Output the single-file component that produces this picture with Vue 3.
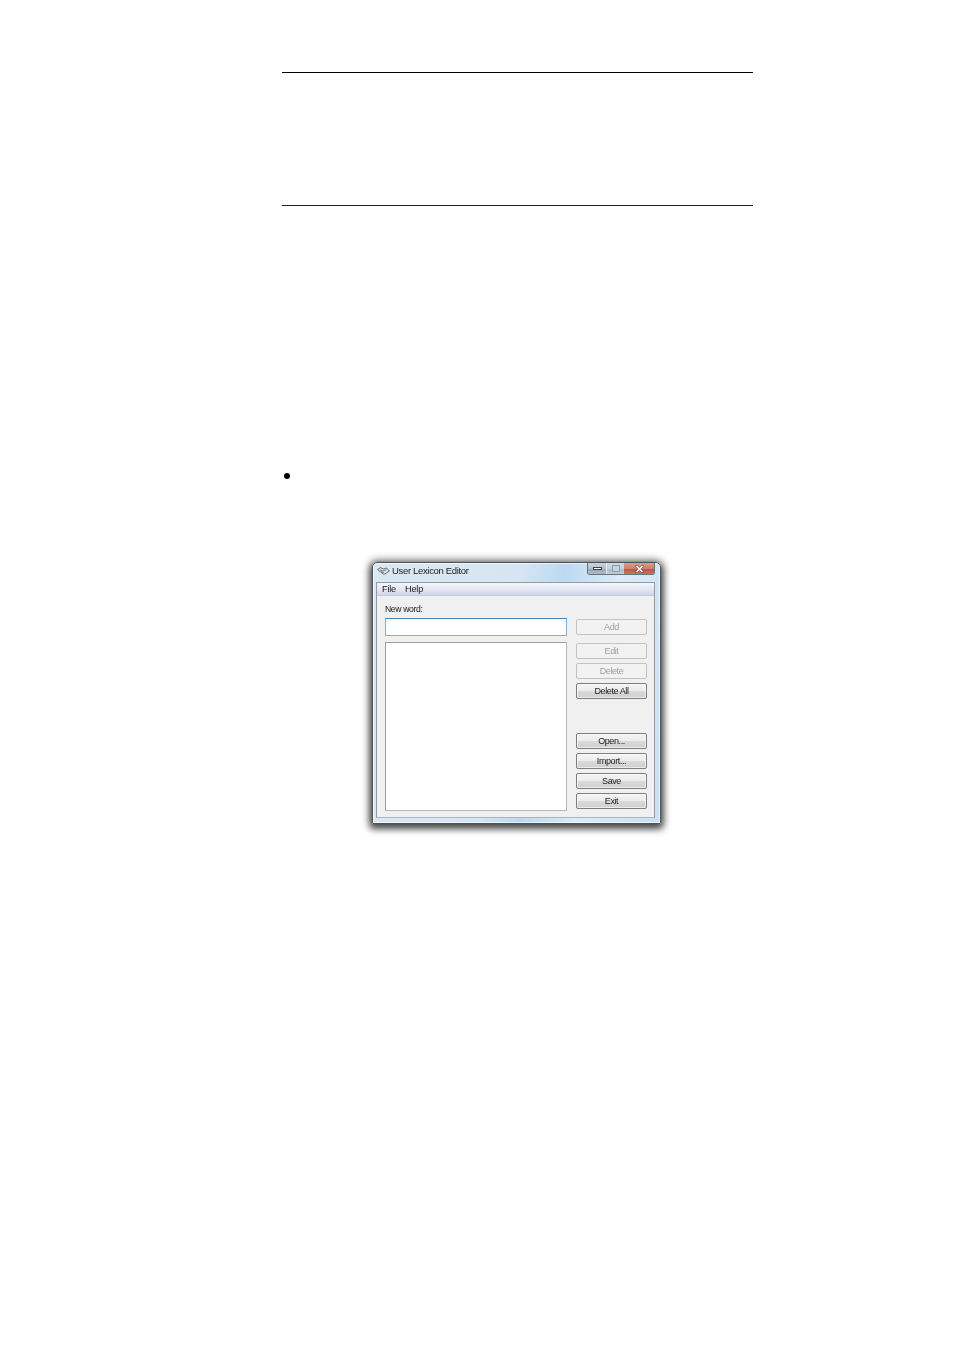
<script setup>
const topButtons = [
  { label: 'Add', disabled: true, cls: 'add' },
  { label: 'Edit', disabled: true, cls: 'edit' },
  { label: 'Delete', disabled: true, cls: 'del' },
  { label: 'Delete All', disabled: false, cls: 'delall' },
]
const bottomButtons = ['Open...', 'Import...', 'Save', 'Exit']
</script>

<template>
  <div class="page">
    <div class="sheet">
      <div class="rule rule-top"></div>
      <div class="rule rule-bottom"></div>
      <div class="bullet"></div>
    </div>
    <div class="window">
      <div class="titlebar">
        <svg class="appicon" width="13" height="10" viewBox="0 0 13 10">
          <path d="M0.5 3.5 L3.5 1.5 L6.5 3 L9.5 2 L12.5 5 L7 8.5 Z" fill="#dfe3e6" stroke="#666c72" stroke-width="1" />
          <path d="M3 3.6 L6 5 L9.5 3.6 M4 5.4 L7 7" fill="none" stroke="#7a8086" stroke-width="1" />
        </svg>
        <span class="title">User Lexicon Editor</span>
        <div class="controls">
          <div class="ctl ctl-min"><span class="min-glyph"></span></div>
          <div class="ctl ctl-max"><span class="max-glyph"></span></div>
          <div class="ctl ctl-close">
            <svg width="9" height="8" viewBox="0 0 9 8">
              <path d="M1.5 1 L7.5 7 M7.5 1 L1.5 7" stroke="#4a3a38" stroke-width="2.6" stroke-linecap="square" opacity="0.55" />
              <path d="M1.5 1 L7.5 7 M7.5 1 L1.5 7" stroke="#fff" stroke-width="1.5" />
            </svg>
          </div>
        </div>
      </div>
      <div class="client">
        <div class="menubar">
          <span class="menu-item">File</span>
          <span class="menu-item">Help</span>
        </div>
        <div class="form">
          <div class="left">
            <div class="label">New word:</div>
            <div class="input"></div>
            <div class="list"></div>
          </div>
          <div class="right">
            <div class="btn-group">
              <div
                v-for="b in topButtons"
                :key="b.label"
                class="btn"
                :class="[b.cls, { disabled: b.disabled }]"
              ><span class="btn-text">{{ b.label }}</span></div>
            </div>
            <div class="btn-group low">
              <div v-for="b in bottomButtons" :key="b" class="btn"><span class="btn-text">{{ b }}</span></div>
            </div>
          </div>
        </div>
      </div>
    </div>
  </div>
</template>

<style scoped>
.page {
  width: 954px;
  height: 1350px;
  background: #fff;
  overflow: hidden;
  font-family: "Liberation Sans", Arial, sans-serif;
}
.sheet {
  width: 471px;
  margin-left: 282px;
  padding-top: 72px;
}
.rule {
  height: 1px;
  background: #000;
}
.rule-bottom {
  margin-top: 132px;
  background: #222;
}
.bullet {
  width: 6px;
  height: 6px;
  border-radius: 50%;
  background: #000;
  margin: 267px 0 0 2px;
}
.window {
  box-sizing: border-box;
  width: 289px;
  height: 262px;
  margin: 83px 0 0 372px;
  border: 1px solid #47535e;
  border-radius: 5px 5px 1px 1px;
  background:
    linear-gradient(100deg, #dbe8f3 0%, #d6e5f2 45%, #bcd9f1 58%, #dcebf7 75%, #c9dff2 100%);
  box-shadow:
    0 3px 7px 2px rgba(0, 0, 0, 0.6),
    0 0 9px 2px rgba(0, 0, 0, 0.4),
    inset 0 0 0 1px rgba(255, 255, 255, 0.65);
  display: flex;
  flex-direction: column;
}
.titlebar {
  height: 19px;
  display: flex;
  align-items: flex-start;
  flex: none;
}
.appicon {
  margin: 3px 0 0 4px;
  flex: none;
}
.title {
  margin: 2px 0 0 2px;
  font-size: 9.5px;
  letter-spacing: -0.33px;
  line-height: 12px;
  color: #1a1a1a;
  filter: blur(0.35px);
}
.controls {
  margin-left: auto;
  margin-right: 5px;
  display: flex;
  height: 12px;
  border: 1px solid #66727d;
  border-top: none;
  border-radius: 0 0 3px 3px;
  overflow: hidden;
  box-sizing: border-box;
}
.ctl {
  display: flex;
  align-items: center;
  justify-content: center;
  height: 100%;
}
.ctl-min {
  width: 18px;
  background: linear-gradient(#c7d3de 0%, #b4c2ce 50%, #98a7b4 55%, #adbbc7 100%);
  border-right: 1px solid #e4ebf1;
}
.ctl-max {
  width: 17px;
  background: linear-gradient(#cfdbe5 0%, #c2d0db 50%, #aebdc9 55%, #c0cdd8 100%);
}
.ctl-close {
  width: 30px;
  background: linear-gradient(#dc9a8e 0%, #d27e70 50%, #bd5443 55%, #cc7566 100%);
}
.min-glyph {
  display: block;
  width: 9px;
  height: 3px;
  box-sizing: border-box;
  background: #fff;
  border: 1px solid #3c4650;
}
.max-glyph {
  display: block;
  width: 8px;
  height: 7px;
  box-sizing: border-box;
  background: #c8d4de;
  border: 1px solid #8d9ba8;
}
.client {
  box-sizing: border-box;
  width: 279px;
  height: 236px;
  margin-left: 3px;
  background: #f0f0f0;
  border: 1px solid #8f9ba7;
  border-bottom-color: #a9b6c2;
  display: flex;
  flex-direction: column;
}
.menubar {
  height: 13px;
  padding-left: 5px;
  padding-bottom: 1px;
  box-sizing: border-box;
  display: flex;
  gap: 9px;
  align-items: center;
  background: linear-gradient(#f4f5fb 0%, #e3e5f3 55%, #d2d6ea 100%);
  border-bottom: 1px solid #c6cbdf;
  flex: none;
}
.menu-item {
  font-size: 9.2px;
  letter-spacing: -0.2px;
  color: #1a1a1a;
  filter: blur(0.35px);
}
.form {
  flex: 1;
  display: flex;
  padding: 8px 7px 6px 8px;
  gap: 9px;
}
.left {
  width: 182px;
  display: flex;
  flex-direction: column;
}
.label {
  font-size: 8.6px;
  letter-spacing: -0.35px;
  line-height: 10px;
  height: 14px;
  color: #1a1a1a;
  filter: blur(0.35px);
}
.input {
  box-sizing: border-box;
  height: 18px;
  background: #fff;
  border: 1px solid #7fb0d6;
  border-top-color: #4d86b4;
}
.list {
  box-sizing: border-box;
  height: 169px;
  margin-top: 6px;
  background: #fff;
  border: 1px solid #9a9fa5;
  border-right-color: #b3b8bd;
  border-bottom-color: #b3b8bd;
}
.right {
  width: 71px;
  display: flex;
  flex-direction: column;
  padding-top: 15px;
}
.btn-group {
  display: flex;
  flex-direction: column;
  gap: 4px;
}
.low {
  margin-top: 34px;
}
.btn {
  box-sizing: border-box;
  height: 16px;
  border: 1px solid #7d7d7d;
  border-radius: 2px;
  background: linear-gradient(#f4f4f4 0%, #ececec 48%, #d9d9d9 52%, #cfcfcf 100%);
  box-shadow: inset 0 0 0 1px rgba(255, 255, 255, 0.6);
  font-size: 9px;
  letter-spacing: -0.4px;
  line-height: 14px;
  text-align: center;
  color: #1a1a1a;
}
.btn-text {
  display: inline-block;
  filter: blur(0.3px);
}
.btn.disabled {
  background: #f2f2f2;
  border-color: #c2c2c2;
  color: #a0a0a0;
  box-shadow: none;
}
.btn.add {
  margin-bottom: 4px;
}
</style>

<style>
html, body {
  margin: 0;
  background: #fff;
}
</style>
